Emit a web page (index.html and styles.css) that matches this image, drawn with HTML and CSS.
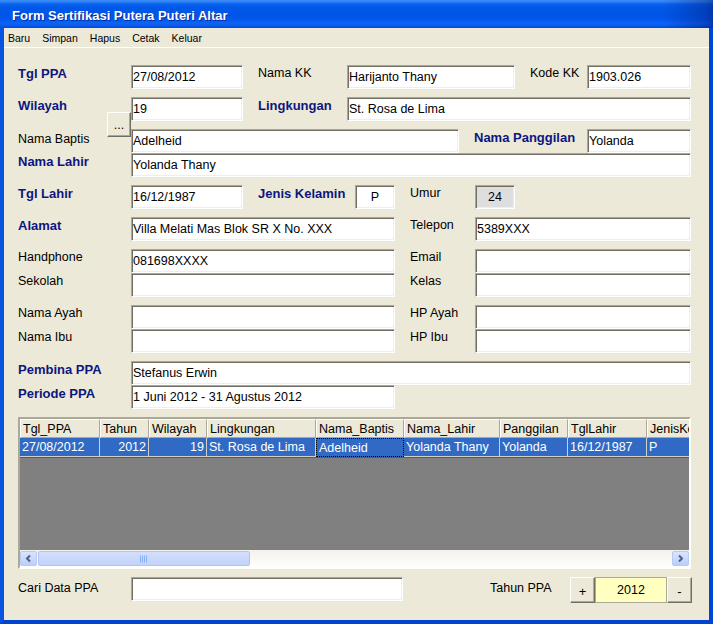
FILE: index.html
```html
<!DOCTYPE html>
<html>
<head>
<meta charset="utf-8">
<title>Form Sertifikasi Putera Puteri Altar</title>
<link rel="stylesheet" href="styles.css">
</head>
<body>
<div class="window">
  <div class="titlebar"><span class="title">Form Sertifikasi Putera Puteri Altar</span></div>
  <div class="frame">
    <div class="menubar">
      <span>Baru</span><span>Simpan</span><span>Hapus</span><span>Cetak</span><span>Keluar</span>
    </div>
    <div class="content">
      <div class="row">
        <div class="lbl b c1">Tgl PPA</div>
        <div class="tb w112">27/08/2012</div>
        <div class="lbl c2">Nama KK</div>
        <div class="tb w168">Harijanto Thany</div>
        <div class="lbl c3">Kode KK</div>
        <div class="tb w104">1903.026</div>
      </div>
      <div class="row mt">
        <div class="lbl b c1">Wilayah</div>
        <div class="tb w112">19</div>
        <div class="lbl b c2">Lingkungan</div>
        <div class="tb w344">St. Rosa de Lima</div>
      </div>
      <div class="row mt">
        <div class="lbl c1 has-btn">Nama Baptis<div class="btn dots">...</div></div>
        <div class="tb w328">Adelheid</div>
        <div class="lbl b c4">Nama Panggilan</div>
        <div class="tb w104">Yolanda</div>
      </div>
      <div class="row">
        <div class="lbl b c1">Nama Lahir</div>
        <div class="tb w560">Yolanda Thany</div>
      </div>
      <div class="row mt">
        <div class="lbl b c1">Tgl Lahir</div>
        <div class="tb w112">16/12/1987</div>
        <div class="lbl b c5">Jenis Kelamin</div>
        <div class="tb w40 center">P</div>
        <div class="lbl c6">Umur</div>
        <div class="tb w40 center ro">24</div>
      </div>
      <div class="row mt">
        <div class="lbl b c1">Alamat</div>
        <div class="tb w264">Villa Melati Mas Blok SR X No. XXX</div>
        <div class="lbl c6">Telepon</div>
        <div class="tb w216">5389XXX</div>
      </div>
      <div class="row mt">
        <div class="lbl c1">Handphone</div>
        <div class="tb w264">081698XXXX</div>
        <div class="lbl c6">Email</div>
        <div class="tb w216"></div>
      </div>
      <div class="row">
        <div class="lbl c1">Sekolah</div>
        <div class="tb w264"></div>
        <div class="lbl c6">Kelas</div>
        <div class="tb w216"></div>
      </div>
      <div class="row mt">
        <div class="lbl c1">Nama Ayah</div>
        <div class="tb w264"></div>
        <div class="lbl c6">HP Ayah</div>
        <div class="tb w216"></div>
      </div>
      <div class="row">
        <div class="lbl c1">Nama Ibu</div>
        <div class="tb w264"></div>
        <div class="lbl c6">HP Ibu</div>
        <div class="tb w216"></div>
      </div>
      <div class="row mt">
        <div class="lbl b c1">Pembina PPA</div>
        <div class="tb w560">Stefanus Erwin</div>
      </div>
      <div class="row">
        <div class="lbl b c1">Periode PPA</div>
        <div class="tb w264">1 Juni 2012 - 31 Agustus 2012</div>
      </div>

      <div class="grid mt">
        <div class="grow ghead">
          <div class="gc k1">Tgl_PPA</div>
          <div class="gc k2">Tahun</div>
          <div class="gc k3">Wilayah</div>
          <div class="gc k4">Lingkungan</div>
          <div class="gc k5">Nama_Baptis</div>
          <div class="gc k6">Nama_Lahir</div>
          <div class="gc k7">Panggilan</div>
          <div class="gc k8">TglLahir</div>
          <div class="gc k9">JenisKelamin</div>
        </div>
        <div class="grow gdata">
          <div class="gc k1">27/08/2012</div>
          <div class="gc k2 r">2012</div>
          <div class="gc k3 r">19</div>
          <div class="gc k4">St. Rosa de Lima</div>
          <div class="gc k5 focus">Adelheid</div>
          <div class="gc k6">Yolanda Thany</div>
          <div class="gc k7">Yolanda</div>
          <div class="gc k8">16/12/1987</div>
          <div class="gc k9">P</div>
        </div>
        <div class="gempty"></div>
        <div class="hscroll">
          <div class="sbtn">
            <svg width="9" height="9" viewBox="0 0 9 9"><path d="M6 1.5 L3 4.5 L6 7.5" fill="none" stroke="#4D6185" stroke-width="2"/></svg>
          </div>
          <div class="strack">
            <div class="sthumb">
              <svg width="8" height="8" viewBox="0 0 8 8"><path d="M0.5 0.5V7.5M2.5 0.5V7.5M4.5 0.5V7.5M6.5 0.5V7.5" stroke="#8CB0F8" stroke-width="1"/></svg>
            </div>
          </div>
          <div class="sbtn">
            <svg width="9" height="9" viewBox="0 0 9 9"><path d="M3 1.5 L6 4.5 L3 7.5" fill="none" stroke="#4D6185" stroke-width="2"/></svg>
          </div>
        </div>
      </div>

      <div class="row bottom">
        <div class="lbl c1 low">Cari Data PPA</div>
        <div class="tb w272"></div>
        <div class="lbl low tahun">Tahun PPA</div>
        <div class="btn pm">+</div>
        <div class="tb yellow center">2012</div>
        <div class="btn pm">-</div>
      </div>
    </div>
  </div>
</div>
</body>
</html>
```
FILE: styles.css
```css
* { box-sizing: border-box; }

html, body {
  margin: 0;
  padding: 0;
}

body {
  width: 713px;
  height: 624px;
  overflow: hidden;
  background: #ECE9D8;
  font-family: "Liberation Sans", Arial, sans-serif;
  color: #000;
}

.window {
  width: 713px;
  height: 624px;
  display: flex;
  flex-direction: column;
}

.titlebar {
  height: 28px;
  flex: none;
  display: flex;
  align-items: center;
  padding: 4px 0 0 12px;
  background:
    linear-gradient(to right, rgba(0, 0, 0, 0) 93%, rgba(0, 20, 110, 0.35) 99%, rgba(0, 20, 110, 0.5) 100%),
    linear-gradient(to bottom, #3E8DF7 0, #2C80F6 2px, #0862EE 4px, #0058E8 8px, #0055E6 55%, #0558ED 72%, #0B64F5 82%, #0A5EF0 90%, #0047D6 100%);
}

.title {
  color: #fff;
  font-weight: bold;
  font-size: 13px;
  line-height: 16px;
  text-shadow: 1px 1px 0 #0A2A9A;
}

.frame {
  flex: 1;
  display: flex;
  flex-direction: column;
  border-left: 4px solid #0A55E0;
  border-right: 4px solid #0046D5;
  border-bottom: 4px solid #0043CF;
  background: #ECE9D8;
}

.menubar {
  height: 20px;
  flex: none;
  display: flex;
  align-items: center;
  gap: 12px;
  padding-left: 4px;
  font-size: 10.5px;
  border-bottom: 1px solid #fff;
}

.content {
  flex: 1;
  display: flex;
  flex-direction: column;
  padding: 17px 0 0 14px;
}

.row {
  display: flex;
  height: 24px;
  flex: none;
}

.mt { margin-top: 8px; }

.lbl {
  flex: none;
  font-size: 12.5px;
  line-height: 15px;
  padding-top: 1px;
  white-space: nowrap;
}

.lbl.b {
  font-weight: bold;
  font-size: 13px;
  color: #0C1680;
}

.c1 { width: 113px; }
.c2 { width: 89px; margin-left: 15px; }
.c3 { width: 57px; margin-left: 15px; }
.c4 { width: 113px; margin-left: 15px; }
.c5 { width: 97px; margin-left: 15px; }
.c6 { width: 65px; margin-left: 15px; }

.has-btn { position: relative; padding-top: 3px; }

.tb {
  flex: none;
  height: 24px;
  display: flex;
  align-items: center;
  padding-left: 1px;
  background: #fff;
  font-size: 12.5px;
  white-space: nowrap;
  overflow: hidden;
  border: 1px solid;
  border-color: #ACA899 #FFFFFF #FFFFFF #ACA899;
  box-shadow: inset 1px 1px 0 #716F64, inset -1px -1px 0 #F1EFE2;
}

.tb.center { justify-content: center; padding-left: 0; }
.tb.ro { background: #DEDEDE; }

.w40 { width: 40px; }
.w104 { width: 104px; }
.w112 { width: 112px; }
.w168 { width: 168px; }
.w216 { width: 216px; }
.w264 { width: 264px; }
.w272 { width: 272px; }
.w328 { width: 328px; }
.w344 { width: 344px; }
.w560 { width: 560px; }

.btn {
  display: flex;
  align-items: center;
  justify-content: center;
  background: #ECE9D8;
  font-size: 12.5px;
  border: 1px solid;
  border-color: #FFFFFF #716F64 #716F64 #FFFFFF;
  box-shadow: inset -1px -1px 0 #ACA899;
}

.dots {
  position: absolute;
  left: 89px;
  top: -17px;
  width: 24px;
  height: 25px;
  padding-top: 2px;
}

/* grid */
.grid {
  flex: none;
  width: 673px;
  height: 152px;
  display: flex;
  flex-direction: column;
  overflow: hidden;
  border: 2px solid;
  border-color: #ACA899 #FFFFFF #FFFFFF #ACA899;
  box-shadow: inset 1px 1px 0 #716F64;
  background: #808080;
}

.grow {
  display: flex;
  flex: none;
  height: 19px;
  font-size: 12.5px;
}

.gc {
  flex: none;
  display: flex;
  align-items: center;
  padding: 0 2px;
  white-space: nowrap;
  overflow: hidden;
}

.ghead .gc {
  background: #ECE9D8;
  border-left: 1px solid #fff;
  border-top: 1px solid #fff;
  border-right: 1px solid #ACA899;
  border-bottom: 1px solid #ACA899;
}

.gdata .gc {
  background: #316AC5;
  color: #fff;
  border-right: 1px solid #D4D0C8;
  border-bottom: 1px solid #D4D0C8;
}

.gdata .gc.focus {
  border: 1px dotted #FFFFFF;
  outline: 1px dotted #000;
  outline-offset: -1px;
}

.gc.r { justify-content: flex-end; }

.k1 { width: 80px; }
.k2 { width: 49px; }
.k3 { width: 58px; }
.k4 { width: 109px; }
.k5 { width: 88px; }
.k6 { width: 96px; }
.k7 { width: 68px; }
.k8 { width: 79px; }
.k9 { width: 60px; }

.gempty { flex: 1; background: #808080; border-top: 1px solid #5A5A5A; }

.hscroll {
  flex: none;
  height: 17px;
  display: flex;
  padding: 1px 0;
  background: linear-gradient(to bottom, #F3F1EC, #FEFEFB);
}

.sbtn {
  flex: none;
  width: 17px;
  height: 15px;
  display: flex;
  align-items: center;
  justify-content: center;
  border: 1px solid #B7CAF5;
  border-radius: 2px;
  background: linear-gradient(to bottom, #D9E4FE, #BCCEF9);
}

.strack {
  flex: 1;
  display: flex;
  padding: 0 1px;
}

.sthumb {
  width: 212px;
  height: 15px;
  display: flex;
  align-items: center;
  justify-content: center;
  border: 1px solid #B3C6F3;
  border-radius: 2px;
  background: linear-gradient(to bottom, #D2DEFC, #C2D3FB);
}

/* bottom */
.row.bottom {
  margin-top: 8px;
  height: 26px;
  align-items: flex-start;
}

.lbl.low { padding-top: 4px; }

.tahun { margin-left: 87px; width: 80px; }

.pm {
  width: 25px;
  height: 26px;
  flex: none;
  font-size: 13px;
  padding-top: 3px;
}

.tb.yellow {
  width: 72px;
  height: 26px;
  background: #FFFFC0;
  border: 1px solid #ACA899;
  box-shadow: none;
}
```
